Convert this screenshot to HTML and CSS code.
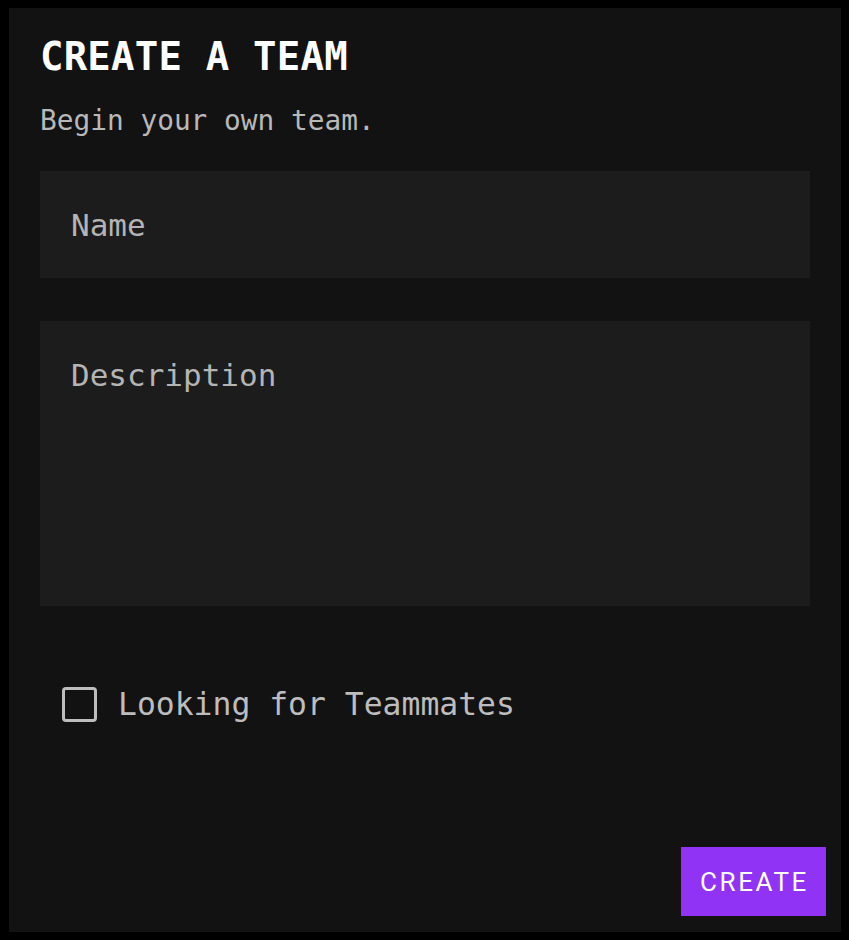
FILE: index.html
```html
<!DOCTYPE html>
<html lang="en">
<head>
<meta charset="utf-8">
<title>Create a Team</title>
<link rel="stylesheet" href="styles.css">
</head>
<body>
<div class="card">
  <h1 class="title">CREATE A TEAM</h1>
  <p class="subtitle">Begin your own team.</p>
  <form class="form">
    <input class="field field-name" type="text" placeholder="Name">
    <textarea class="field field-desc" placeholder="Description"></textarea>
    <label class="check-row">
      <span class="check-box"></span>
      <span class="check-label">Looking for Teammates</span>
    </label>
  </form>
  <div class="footer">
    <button class="btn-create" type="button">CREATE</button>
  </div>
</div>
</body>
</html>
```

FILE: styles.css
```css
html, body {
  margin: 0;
  padding: 0;
  background: #000;
}
body {
  padding: 8px 8px 8px 9px;
  font-family: "DejaVu Sans Mono", "Liberation Mono", monospace;
}
.card {
  box-sizing: border-box;
  width: 832px;
  height: 924px;
  background: #121212;
  padding: 25px 15px 16px 31px;
  display: flex;
  flex-direction: column;
}
.title {
  margin: 0;
  font-size: 39px;
  line-height: 48px;
  font-weight: 700;
  color: #ffffff;
  letter-spacing: 0.2px;
}
.subtitle {
  margin: 23px 0 0 0;
  font-size: 27.8px;
  line-height: 34px;
  color: #b8b8b8;
}
.form {
  margin: 33px 16px 0 0;
  display: flex;
  flex-direction: column;
}
.field {
  box-sizing: border-box;
  width: 100%;
  border: none;
  outline: none;
  background: #1c1c1c;
  color: #c0c0c0;
  font-family: "DejaVu Sans Mono", "Liberation Mono", monospace;
  font-size: 31px;
  padding: 0 0 0 31px;
  margin: 0;
}
.field::placeholder {
  color: #b4b4b4;
  opacity: 1;
}
.field-name {
  height: 107px;
}
.field-desc {
  display: block;
  margin-top: 43px;
  height: 285px;
  resize: none;
  padding-top: 36px;
  line-height: 1.2;
}
.check-row {
  margin-top: 81px;
  padding-left: 22px;
  display: flex;
  align-items: center;
  gap: 21px;
  height: 35px;
}
.check-box {
  box-sizing: border-box;
  width: 35px;
  height: 35px;
  border: 3.5px solid #bdbdbd;
  border-radius: 4px;
}
.check-label {
  font-size: 31.4px;
  color: #bdbdbd;
  line-height: 35px;
}
.footer {
  margin-top: auto;
  display: flex;
  justify-content: flex-end;
}
.btn-create {
  width: 145px;
  height: 69px;
  border: none;
  background: #9133f5;
  color: #ffffff;
  font-family: Roboto, "Liberation Sans", sans-serif;
  font-size: 26px;
  letter-spacing: 2.6px;
  padding: 0 0 0 2px;
  cursor: pointer;
}
```
